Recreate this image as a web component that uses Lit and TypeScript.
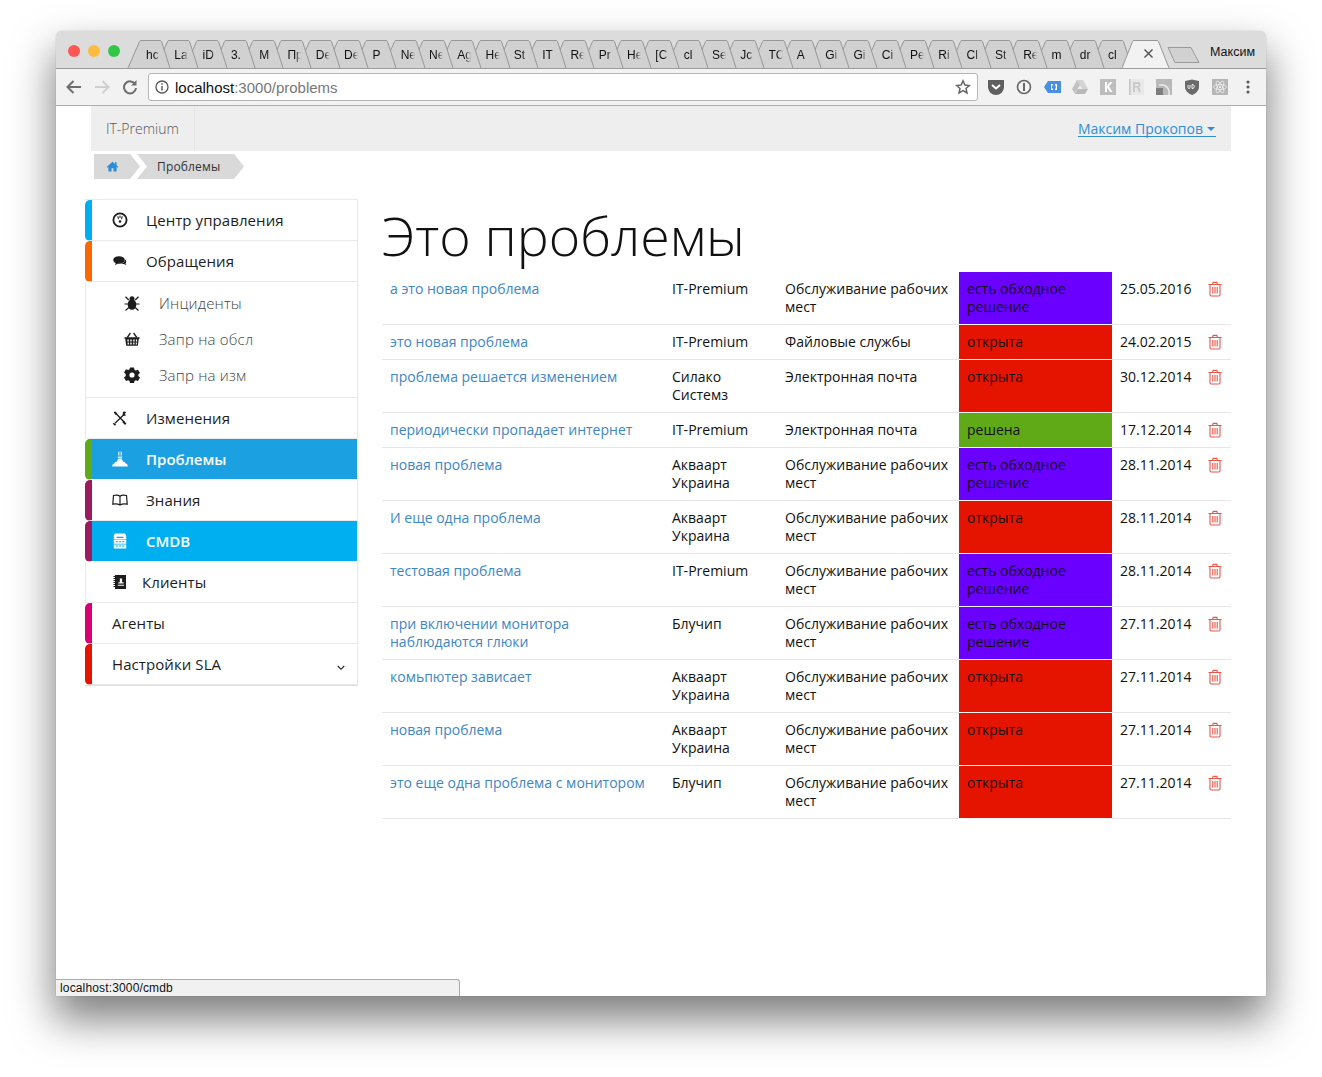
import { LitElement, css, html, svg } from "lit";
import { customElement } from "lit/decorators.js";

const TABS = ["hc", "La", "iD", "3.", "M", "Пр", "De", "De", "P", "Ne", "Ne", "Ag", "He", "St", "IT", "Re", "Pr", "He", "[C", "cl", "Se", "Jc", "TC", "A", "Gi", "Gi", "Ci", "Pe", "Ri", "Cl", "St", "Re", "m", "dr", "cl"];

const PROBLEMS = [
    { name: "а это новая проблема", client: "IT-Premium", service: "Обслуживание рабочих мест", status: "есть обходное решение", kind: "workaround", date: "25.05.2016" },
    { name: "это новая проблема", client: "IT-Premium", service: "Файловые службы", status: "открыта", kind: "open", date: "24.02.2015" },
    { name: "проблема решается изменением", client: "Силако Системз", service: "Электронная почта", status: "открыта", kind: "open", date: "30.12.2014" },
    { name: "периодически пропадает интернет", client: "IT-Premium", service: "Электронная почта", status: "решена", kind: "solved", date: "17.12.2014" },
    { name: "новая проблема", client: "Акваарт Украина", service: "Обслуживание рабочих мест", status: "есть обходное решение", kind: "workaround", date: "28.11.2014" },
    { name: "И еще одна проблема", client: "Акваарт Украина", service: "Обслуживание рабочих мест", status: "открыта", kind: "open", date: "28.11.2014" },
    { name: "тестовая проблема", client: "IT-Premium", service: "Обслуживание рабочих мест", status: "есть обходное решение", kind: "workaround", date: "28.11.2014" },
    { name: "при включении монитора наблюдаются глюки", client: "Блучип", service: "Обслуживание рабочих мест", status: "есть обходное решение", kind: "workaround", date: "27.11.2014" },
    { name: "комьпютер зависает", client: "Акваарт Украина", service: "Обслуживание рабочих мест", status: "открыта", kind: "open", date: "27.11.2014" },
    { name: "новая проблема", client: "Акваарт Украина", service: "Обслуживание рабочих мест", status: "открыта", kind: "open", date: "27.11.2014" },
    { name: "это еще одна проблема с монитором", client: "Блучип", service: "Обслуживание рабочих мест", status: "открыта", kind: "open", date: "27.11.2014" },
];

const icon = (body: unknown, size = 16, box = "0 0 16 16") =>
    html`<svg width=${size} height=${size} viewBox=${box} fill="currentColor">${body}</svg>`;

const ICONS = {
    gauge: svg`<circle cx="8" cy="8" r="6.600" fill="none" stroke="currentColor" stroke-width="1.800"/><path d="M5.300 4.200h1.200l.4 3H6zM9.500 4.200h1.200l-.7 3H9.100zM7.500 3.500h1v2.500h-1z"/><circle cx="8" cy="9.500" r="1.300"/>`,
    comments: svg`<ellipse cx="7" cy="7" rx="5.800" ry="3.800"/><path d="M4 9.500 3 12l3.500-1.600z"/><path d="M13 6.500c1.600 1 1.700 2.700.5 3.700l.9 1.800-2.700-1.100c-1 .2-1.600.1-2.400-.1 2-.4 3.800-2.300 3.700-4.300z"/>`,
    bug: svg`<ellipse cx="8" cy="9.500" rx="4.300" ry="5.300"/><circle cx="8" cy="3.800" r="2.500"/><path d="M1.500 1.800 4.800 5M14.500 1.800 11.200 5M.5 9h15M1.500 15.500 4.800 12.500M14.500 15.500 11.200 12.500" stroke="currentColor" stroke-width="1.200" fill="none"/>`,
    basket: svg`<path d="M.5 6.300h15v1.500h-.7l-1 7H2.200l-1-7H.5zM3.400 8.500v2h1.400v-2zM6.300 8.500v2h1.400v-2zM9.200 8.500v2h1.400v-2zM11.900 8.500v2h1.200v-2zM3.600 11.600v2h1.300v-2zM6.300 11.600v2h1.400v-2zM9.200 11.600v2h1.300v-2zM11.800 11.600v2h1.100v-2z" fill-rule="evenodd"/><path d="M3.200 6.500 6.400 2M12.800 6.500 9.600 2" stroke="currentColor" stroke-width="1.300" fill="none"/>`,
    cog: svg`<path fill-rule="evenodd" d="M6 .5h4l.5 2.200 1.300.7 2.200-.7 2 3.400-1.700 1.500v1.500l1.700 1.500-2 3.400-2.200-.7-1.300.7-.5 2.200H6l-.5-2.200-1.300-.7-2.200.7-2-3.400 1.700-1.500V7.100L0 5.600l2-3.400 2.200.7 1.300-.7zM8 5.400a2.600 2.600 0 1 0 0 5.200 2.600 2.600 0 0 0 0-5.200z"/>`,
    tools: svg`<path d="m3.500 3 9.300 9.700M12.500 4 3 13.200" stroke="currentColor" stroke-width="1.300" fill="none"/><path d="M1.700 2.500 3 1.200l2.400 2.200-1.600 1.500zM10.900 2c1.400-.8 2.800-.7 3.100.5l-1.400 1.400 1.400 1c-.6 1.100-2.100 1.200-3.300.5z"/><path d="m11.600 10.800 2.800 2.800-1.400 1.300-2.800-2.800zM1.800 12.800l2.400 1.900-1.300 1-2.100-1.900z"/>`,
    flame: svg`<path d="M.2 15.500c0-2 1-3 2.300-3 .3-1.100 1.100-1.700 2.200-1.700L6.500 7.500h3l1.800 3.300c1.100 0 1.900.6 2.200 1.700 1.300 0 2.300 1 2.300 3z"/><rect x="5.800" y="5.600" width="4.400" height="1.300"/><path d="M6.500 .8v3.800M8 .3v4.300M9.500 .8v3.800" stroke="currentColor" stroke-width=".7" fill="none"/>`,
    book: svg`<path d="M8 4.200C6.500 3 3.500 3 1.500 3.500L.8 12.200c2.300-.5 5-.4 7.200.8 2.200-1.200 4.900-1.300 7.200-.8l-.7-8.700C12.500 3 9.500 3 8 4.200zM8 4.200V13" fill="none" stroke="currentColor" stroke-width="1.200"/>`,
    server: svg`<path fill-rule="evenodd" d="M4 .5h8c1.200 0 2.200 1 2.200 2.400v12.600H1.800V2.900C1.800 1.500 2.800.5 4 .5zM4.500 3.800V5h7V3.800zM1.800 6.400v.7h12.400v-.7zM3.700 8.200v1.100h2.300V8.200zM6.900 8.200v1.100h2.200V8.200zM10 8.200v1.100h2.300V8.200zM1.800 10.700v.7h12.400v-.7zM3.700 12.400v1.100h2.300v-1.100zM6.900 12.400v1.100h2.200v-1.100zM10 12.400v1.100h2.300v-1.100z"/>`,
    contacts: svg`<path fill-rule="evenodd" d="M3 1h11v14H3zM7.800 4.500v3.700H6.300v1.400h5.300V8.200h-1.500V4.500zM5.800 10.800v1h6.300v-1z"/><path d="M1.500 2.500H3M1.500 4.500H3M1.500 6.500H3M1.500 8.500H3M1.500 10.500H3M1.500 12.500H3" stroke="currentColor" stroke-width="1" fill="none"/>`,
    home: svg`<path d="M8 2 .8 8.500l.9 1 1.300-1.100V14h3.800v-4h2.400v4H13V8.400l1.300 1.100.9-1-2.200-2V2.800h-2v2z"/>`,
    trash: svg`<path d="M1.500 3.500h13M5.500 3.500 6.200 1.400h3.600l.7 2.100M3 3.500v10.300c0 .8.500 1.200 1.200 1.200h7.600c.7 0 1.200-.4 1.200-1.200V3.500M5.800 6v6.500M8 6v6.500M10.200 6v6.500" fill="none" stroke="currentColor" stroke-width="1.100"/>`,
};

@customElement("app-sidebar")
export class AppSidebar extends LitElement {
    static styles = css`
        :host {
            display: block;
            align-self: flex-start;
            width: 273px;
            font: 15px/20px "Open Sans", sans-serif;
            letter-spacing: .08px;
            color: #1d1d1d;
            background: #fff;
            border-top: 1px solid #e9e9e9;
            box-shadow: inset -1px 0 0 #e9e9e9, 0 1px 0 #ddd;
        }
        .item {
            height: 40px;
            display: flex;
            align-items: center;
            border-left: 7px solid transparent;
            border-bottom: 1px solid #e9e9e9;
            border-radius: 5px 0 0 5px;
            padding-left: 20px;
        }
        .item.plain {
            border-left: 1px solid #e9e9e9;
            padding-left: 26px;
            border-radius: 0;
        }
        .item.active {
            color: #fff;
            border-bottom: 1px solid #fff;
            margin-right: 1px;
            letter-spacing: 0;
        }
        .item.active.problems { background: #1ba1e2; font-weight: 600; }
        .item.active.cmdb { background: #00aff0; font-weight: 600; }
        .item svg { margin-right: 18px; flex: none; }
        .item.noicon { padding-left: 20px; }
        .item.clients svg { margin-right: 14px; }
        .bar-cyan { border-left-color: #00aff0; }
        .bar-orange { border-left-color: #fa6800; }
        .bar-green { border-left-color: #60a917; }
        .bar-plum { border-left-color: #9b1b5e; }
        .bar-magenta { border-left-color: #d80073; }
        .bar-red { border-left-color: #e51400; }
        .sub {
            border-left: 1px solid #e9e9e9;
            border-bottom: 1px solid #e9e9e9;
            padding: 3px 0 4px;
        }
        .sub div {
            height: 36px;
            display: flex;
            align-items: center;
            padding-left: 38px;
            color: #444;
            font-weight: 300;
            letter-spacing: .2px;
        }
        .sub svg { margin-right: 19px; color: #1d1d1d; }
        .item .chevron { margin: 8px 13px 0 auto; }
    `;
    render() {
        return html`
            <div class="item bar-cyan">${icon(ICONS.gauge)}Центр управления</div>
            <div class="item bar-orange">${icon(ICONS.comments)}Обращения</div>
            <div class="sub">
                <div>${icon(ICONS.bug)}Инциденты</div>
                <div>${icon(ICONS.basket)}Запр на обсл</div>
                <div>${icon(ICONS.cog)}Запр на изм</div>
            </div>
            <div class="item plain">${icon(ICONS.tools)}Изменения</div>
            <div class="item active problems bar-green">${icon(ICONS.flame)}Проблемы</div>
            <div class="item bar-plum">${icon(ICONS.book)}Знания</div>
            <div class="item active cmdb bar-plum">${icon(ICONS.server)}CMDB</div>
            <div class="item plain clients">${icon(ICONS.contacts)}Клиенты</div>
            <div class="item noicon bar-magenta">Агенты</div>
            <div class="item noicon bar-red">
                Настройки SLA
                <svg class="chevron" width="8" height="6" viewBox="0 0 8 6" fill="none" stroke="currentColor" stroke-width="1.100"><path d="m.8 1 3.200 3.300L7.200 1"/></svg>
            </div>
        `;
    }
}

@customElement("app-root")
export class AppRoot extends LitElement {
    static styles = css`
        :host {
            display: block;
            width: 1322px;
            height: 1077px;
            box-sizing: border-box;
            padding: 31px 56px 81px;
            background: #fff;
            overflow: hidden;
        }
        .window {
            position: relative;
            height: 965px;
            display: flex;
            flex-direction: column;
            background: #fff;
            border-radius: 6px 6px 0 0;
            box-shadow: 0 22px 42px 2px rgba(0, 0, 0, .5), 0 0 1px rgba(0, 0, 0, .4);
            font: 14px/18px "Open Sans", sans-serif;
            color: #111;
        }
        .titlebar {
            height: 37px;
            flex: none;
            display: flex;
            align-items: flex-end;
            background: #dcdcdc;
            border-bottom: 1px solid #9d9d9d;
            border-radius: 6px 6px 0 0;
            position: relative;
        }
        .lights {
            display: flex;
            gap: 8px;
            position: absolute;
            left: 12px;
            top: 14px;
        }
        .lights i { width: 12px; height: 12px; border-radius: 50%; }
        .red { background: #fc5753; }
        .amber { background: #fdbc40; }
        .green { background: #33c748; }
        .tabs {
            display: flex;
            margin-left: 72px;
            height: 28px;
        }
        .tab {
            position: relative;
            width: 28.3px;
            height: 28px;
            font: 12px/28px "Liberation Sans", sans-serif;
            color: #111;
        }
        .tab svg { position: absolute; left: 0; top: 0; overflow: visible; }
        .tab span {
            position: absolute;
            left: 18px;
            top: 1px;
            width: 14px;
            overflow: hidden;
            white-space: nowrap;
            -webkit-mask-image: linear-gradient(to right, #000 60%, transparent);
            mask-image: linear-gradient(to right, #000 60%, transparent);
        }
        .tab.active { width: 47px; margin-left: 4px; }
        .tab.active b {
            position: absolute;
            left: 21px;
            top: 8px;
        }
        .newtab { margin: 0 0 4px -2px; flex: none; align-self: flex-end; }
        .profile {
            font: 12.5px "Liberation Sans", sans-serif;
            color: #111;
            margin-left: auto;
            margin-right: 11px;
            align-self: center;
            margin-top: 4px;
        }
        .toolbar {
            height: 36px;
            flex: none;
            display: flex;
            align-items: center;
            background: #f2f2f2;
            border-bottom: 1px solid #aeaeae;
            color: #6e6e6e;
        }
        .nav {
            display: flex;
            align-items: center;
            gap: 12px;
            padding-left: 10px;
            width: 82px;
            box-sizing: border-box;
            flex: none;
            margin-right: 10px;
        }
        .nav .off { color: #cfcfcf; }
        .omnibox {
            width: 830px;
            height: 28px;
            box-sizing: border-box;
            flex: none;
            display: flex;
            align-items: center;
            background: #fff;
            border: 1px solid #b6b6b6;
            border-radius: 3px;
            padding: 0 6px;
            font: 15px "Liberation Sans", sans-serif;
            color: #777;
        }
        .omnibox > svg:first-child { margin-right: 6px; }
        .omnibox em { font-style: normal; color: #111; }
        .omnibox .star { margin-left: auto; }
        .exts {
            display: grid;
            grid-auto-flow: column;
            grid-auto-columns: 28px;
            justify-items: center;
            align-items: center;
            margin-left: 4px;
        }
        .content {
            flex: 1;
            min-height: 0;
        }
        .navbar {
            width: 1140px;
            height: 45px;
            margin-left: 35px;
            display: flex;
            align-items: center;
            background: #eee;
            color: #555;
        }
        .brand {
            height: 100%;
            display: flex;
            align-items: center;
            padding: 0 15px;
            border-right: 1px solid #e5e5e5;
            font-weight: 300;
        }
        .user {
            margin: 1px 15px 0 auto;
            color: #2f8ed6;
            line-height: 15px;
            border-bottom: 1px solid #2f8ed6;
            display: flex;
            align-items: center;
            gap: 4px;
            padding-right: 1px;
        }
        .caret {
            display: inline-block;
            border: 4px solid transparent;
            border-top-color: #2f8ed6;
            border-bottom: 0;
        }
        .crumbs {
            display: flex;
            margin: 3px 0 20px 38px;
            height: 25px;
            font-size: 12px;
            letter-spacing: .15px;
            color: #333;
        }
        .crumbs div {
            display: flex;
            align-items: center;
            background: #d9d9d9;
        }
        .crumbs .home {
            width: 46px;
            padding-left: 12px;
            box-sizing: border-box;
            color: #2a8dd6;
            clip-path: polygon(0 0, 36px 0, 46px 50%, 36px 100%, 0 100%);
        }
        .crumbs .here {
            width: 107px;
            margin-left: -3px;
            padding-left: 20px;
            box-sizing: border-box;
            clip-path: polygon(0 0, 97px 0, 107px 50%, 97px 100%, 0 100%, 10px 50%);
        }
        .main {
            display: flex;
            margin-left: 29px;
        }
        .body {
            margin-left: 24px;
            width: 849px;
        }
        h1 {
            font-size: 53.7px;
            font-weight: 300;
            line-height: 73px;
            margin: 0;
            color: #111;
        }
        table {
            table-layout: fixed;
            width: 849px;
            border-collapse: separate;
            border-spacing: 0;
        }
        td {
            padding: 8px;
            vertical-align: top;
            border-bottom: 1px solid #e6e6e6;
        }
        td a { color: #3d86c6; }
        .open, .workaround, .solved {
            background-clip: padding-box;
            border-bottom-color: #f4f4f4;
        }
        .open { background-color: #e51400; }
        .workaround { background-color: #6a00ff; }
        .solved { background-color: #60a917; }
        .trash { color: #e8574a; padding: 9px 0 0 7px; }
        .status-bubble {
            position: absolute;
            left: 0;
            bottom: 0;
            width: 404px;
            height: 17px;
            box-sizing: border-box;
            background: #f1f1f1;
            border: 1px solid #ababab;
            border-left: 0;
            border-bottom: 0;
            border-radius: 0 3px 0 0;
            padding-left: 4px;
            font: 12px/16px "Liberation Sans", sans-serif;
            letter-spacing: .15px;
            color: #111;
        }
    `;

    renderTab(label: string, i: number) {
        return html`
            <div class="tab" style="z-index:${40 - i}">
                <svg width="42" height="28"><path d="M0 28 11.500 1.500Q12 .5 13 .5H32Q33 .5 33.500 1.500L42 28" fill="#d1d1d1" stroke="#979797"/></svg>
                <span>${label}</span>
            </div>
        `;
    }

    renderExtensions() {
        return html`
            <svg width="18" height="16" viewBox="0 0 18 16"><path d="M1 1h16v7a8 8 0 0 1-16 0z" fill="#5f5f5f"/><path d="m5 6 4 3.500L13 6" fill="none" stroke="#fff" stroke-width="2"/></svg>
            <svg width="16" height="16" viewBox="0 0 16 16"><circle cx="8" cy="8" r="6.500" fill="none" stroke="#666" stroke-width="1.600"/><rect x="7" y="4" width="2" height="8" fill="#666"/></svg>
            <svg width="18" height="14" viewBox="0 0 18 14"><path d="M5 1h13v12H5L1 7z" fill="#4a90e2"/><path d="M8 4h2v1.500H8.800v3H10V10H8zM12 4h2v6h-2V8.500h.8v-3H12z" fill="#fff"/></svg>
            <svg width="18" height="16" viewBox="0 0 18 16"><path d="M6 1h6l5 9h-6z" fill="#d4d4d4"/><path d="M6 1 1 10l3 5 5-9z" fill="#c2c2c2"/><path d="M4 15h10l3-5H7z" fill="#b8b8b8"/></svg>
            <svg width="16" height="16" viewBox="0 0 16 16"><rect width="16" height="16" fill="#bdbdbd"/><path d="M5 3h2v4l3-4h2.500L9 7.500 12.700 13H10L7 8.500V13H5z" fill="#fff"/></svg>
            <svg width="16" height="16" viewBox="0 0 16 16"><rect x="1" width="15" height="16" fill="#e9e9e9"/><rect x="1" width="1.500" height="16" fill="#c4c4c4"/><path d="M5 3h5a2.700 2.700 0 0 1 1 5.200L13 13h-2L9 8.500H7V13H5zM7 5v2h3c1 0 1-2 0-2z" fill="#c9c9c9"/></svg>
            <svg width="16" height="16" viewBox="0 0 16 16"><rect width="16" height="16" fill="#b9b9b9"/><rect y="9" width="7" height="7" fill="#7e7e7e"/><path d="M3 6h3a7 7 0 0 1 7 7v3" fill="none" stroke="#eee" stroke-width="1.500"/></svg>
            <svg width="16" height="16" viewBox="0 0 16 16"><path d="M1 2 8 .5 15 2v6c0 4-4 7-7 8-3-1-7-4-7-8z" fill="#6b6b6b"/><path d="M4 6v2.500c0 1.500 2 1.500 2 0V6M8 5.500v4c3 .5 3-4.500 0-4z" fill="none" stroke="#fff" stroke-width=".9"/></svg>
            <svg width="16" height="16" viewBox="0 0 16 16"><rect width="16" height="16" fill="#b5b5b5"/><g fill="none" stroke="#eee" stroke-width=".8"><ellipse cx="8" cy="8" rx="6.500" ry="2.500"/><ellipse cx="8" cy="8" rx="6.500" ry="2.500" transform="rotate(60 8 8)"/><ellipse cx="8" cy="8" rx="6.500" ry="2.500" transform="rotate(120 8 8)"/></g><circle cx="8" cy="8" r="1.200" fill="#eee"/></svg>
            <svg width="4" height="14" viewBox="0 0 4 14" fill="#555"><circle cx="2" cy="2" r="1.500"/><circle cx="2" cy="7" r="1.500"/><circle cx="2" cy="12" r="1.500"/></svg>
        `;
    }

    render() {
        return html`
            <div class="window">
                <div class="titlebar">
                    <div class="lights">
                        <i class="red"></i>
                        <i class="amber"></i>
                        <i class="green"></i>
                    </div>
                    <div class="tabs">
                        ${TABS.map((t, i) => this.renderTab(t, i))}
                        <div class="tab active" style="z-index:41">
                            <svg width="47" height="28"><path d="M0 28 10.500 1.500Q11 .5 12 .5H35Q36 .5 36.500 1.500L47 28" fill="#f2f2f2" stroke="#979797"/></svg>
                            <b><svg width="11" height="11" viewBox="0 0 11 11" fill="none" stroke="#555" stroke-width="1.500"><path d="m1.500 1.500 8 8M9.500 1.500l-8 8"/></svg></b>
                        </div>
                    </div>
                    <svg class="newtab" width="34" height="18" viewBox="0 0 34 18"><path d="M1 1.500h23l8 15H8z" fill="#d1d1d1" stroke="#9a9a9a"/></svg>
                    <div class="profile">Максим</div>
                </div>
                <div class="toolbar">
                    <div class="nav">
                        <svg width="16" height="14" viewBox="0 0 16 14" fill="none" stroke="currentColor" stroke-width="2"><path d="M15 7H2M7.500 1 1.500 7l6 6"/></svg>
                        <svg class="off" width="16" height="14" viewBox="0 0 16 14" fill="none" stroke="currentColor" stroke-width="2"><path d="M1 7h13M8.500 1l6 6-6 6"/></svg>
                        <svg width="16" height="16" viewBox="0 0 16 16" fill="none" stroke="currentColor" stroke-width="2"><path d="M13.300 5.500A6 6 0 1 0 14 9"/><path d="M14.500 1v5.500H9" fill="currentColor" stroke="none"/></svg>
                    </div>
                    <div class="omnibox">
                        <svg width="14" height="14" viewBox="0 0 14 14"><circle cx="7" cy="7" r="6" fill="none" stroke="#555" stroke-width="1.300"/><path d="M6.300 6h1.400v4.500H6.300zM6.300 3.300h1.400v1.500H6.300z" fill="#555"/></svg>
                        <span><em>localhost</em>:3000/problems</span>
                        <svg class="star" width="16" height="16" viewBox="0 0 16 16"><path d="m8 1.800 1.900 4.200 4.500.5-3.400 3 1 4.500L8 11.700 4 14l1-4.500-3.400-3 4.500-.5z" fill="none" stroke="#666" stroke-width="1.500"/></svg>
                    </div>
                    <div class="exts">${this.renderExtensions()}</div>
                </div>
                <div class="content">
                    <div class="navbar">
                        <div class="brand">IT-Premium</div>
                        <div class="user">Максим Прокопов<span class="caret"></span></div>
                    </div>
                    <div class="crumbs">
                        <div class="home">${icon(ICONS.home, 13)}</div>
                        <div class="here">Проблемы</div>
                    </div>
                    <div class="main">
                        <app-sidebar></app-sidebar>
                        <div class="body">
                            <h1>Это проблемы</h1>
                            <table>
                                <colgroup>
                                    <col style="width:282px" /><col style="width:113px" /><col style="width:182px" />
                                    <col style="width:153px" /><col style="width:88px" /><col style="width:31px" />
                                </colgroup>
                                ${PROBLEMS.map((p) => html`
                                    <tr>
                                        <td><a>${p.name}</a></td>
                                        <td>${p.client}</td>
                                        <td>${p.service}</td>
                                        <td class=${p.kind}>${p.status}</td>
                                        <td>${p.date}</td>
                                        <td class="trash">${icon(ICONS.trash)}</td>
                                    </tr>
                                `)}
                            </table>
                        </div>
                    </div>
                </div>
                <div class="status-bubble">localhost:3000/cmdb</div>
            </div>
        `;
    }
}
